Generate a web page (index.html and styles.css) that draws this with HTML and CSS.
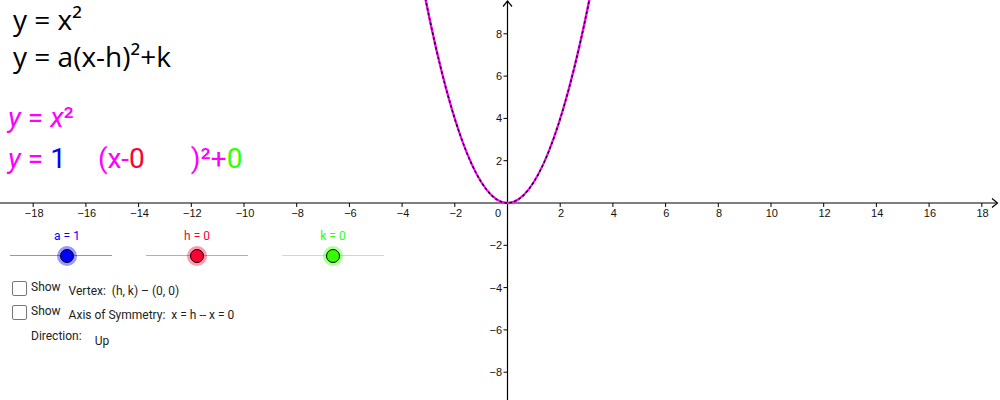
FILE: index.html
```html
<!DOCTYPE html>
<html>
<head>
<meta charset="utf-8">
<link rel="stylesheet" href="styles.css">
</head>
<body>
<div class="applet">
  <svg class="graph" width="1000" height="400" viewBox="0 0 1000 400">
    <g class="axes" stroke="#000" stroke-width="1.2" fill="none">
      <line x1="0" y1="203" x2="997" y2="203"/>
      <polyline points="992,198.5 997.5,203 992,207.5"/>
      <line x1="507.5" y1="400" x2="507.5" y2="1"/>
      <polyline points="503,6.5 507.5,1 512,6.5"/>
    </g>
    <g class="ticks" stroke="#000" stroke-width="1">
      <line x1="33.2" y1="203" x2="33.2" y2="207"/>
      <line x1="85.9" y1="203" x2="85.9" y2="207"/>
      <line x1="138.6" y1="203" x2="138.6" y2="207"/>
      <line x1="191.3" y1="203" x2="191.3" y2="207"/>
      <line x1="244" y1="203" x2="244" y2="207"/>
      <line x1="296.7" y1="203" x2="296.7" y2="207"/>
      <line x1="349.4" y1="203" x2="349.4" y2="207"/>
      <line x1="402.1" y1="203" x2="402.1" y2="207"/>
      <line x1="454.8" y1="203" x2="454.8" y2="207"/>
      <line x1="560.2" y1="203" x2="560.2" y2="207"/>
      <line x1="612.9" y1="203" x2="612.9" y2="207"/>
      <line x1="665.6" y1="203" x2="665.6" y2="207"/>
      <line x1="718.3" y1="203" x2="718.3" y2="207"/>
      <line x1="771" y1="203" x2="771" y2="207"/>
      <line x1="823.7" y1="203" x2="823.7" y2="207"/>
      <line x1="876.4" y1="203" x2="876.4" y2="207"/>
      <line x1="929.1" y1="203" x2="929.1" y2="207"/>
      <line x1="981.8" y1="203" x2="981.8" y2="207"/>
      <line x1="503.5" y1="33.8" x2="507.5" y2="33.8"/>
      <line x1="503.5" y1="76.1" x2="507.5" y2="76.1"/>
      <line x1="503.5" y1="118.4" x2="507.5" y2="118.4"/>
      <line x1="503.5" y1="160.7" x2="507.5" y2="160.7"/>
      <line x1="503.5" y1="245.3" x2="507.5" y2="245.3"/>
      <line x1="503.5" y1="287.6" x2="507.5" y2="287.6"/>
      <line x1="503.5" y1="329.9" x2="507.5" y2="329.9"/>
      <line x1="503.5" y1="372.2" x2="507.5" y2="372.2"/>
    </g>
    <g class="xlabels" text-anchor="middle">
      <text x="34.2" y="217">−18</text>
      <text x="86.9" y="217">−16</text>
      <text x="139.6" y="217">−14</text>
      <text x="192.3" y="217">−12</text>
      <text x="245" y="217">−10</text>
      <text x="297.7" y="217">−8</text>
      <text x="350.4" y="217">−6</text>
      <text x="403.1" y="217">−4</text>
      <text x="455.8" y="217">−2</text>
      <text x="498" y="217">0</text>
      <text x="561" y="217">2</text>
      <text x="613.7" y="217">4</text>
      <text x="666.4" y="217">6</text>
      <text x="719.1" y="217">8</text>
      <text x="771.8" y="217">10</text>
      <text x="824.5" y="217">12</text>
      <text x="877.2" y="217">14</text>
      <text x="929.9" y="217">16</text>
      <text x="982.6" y="217">18</text>
    </g>
    <g class="ylabels" text-anchor="end">
      <text x="502" y="37.8">8</text>
      <text x="502" y="80.1">6</text>
      <text x="502" y="122.4">4</text>
      <text x="502" y="164.7">2</text>
      <text x="502" y="249.3">−2</text>
      <text x="502" y="291.6">−4</text>
      <text x="502" y="333.9">−6</text>
      <text x="502" y="376.2">−8</text>
    </g>
    <path class="curve" d="M424.3,-6.9 Q507.5,412.9 590.7,-6.9" fill="none" stroke="#ff00ff" stroke-width="2.4"/>
    <path class="curve-dash" d="M424.3,-6.9 Q507.5,412.9 590.7,-6.9" fill="none" stroke="#000" stroke-width="1.4" stroke-dasharray="2.5 2.5"/>
  </svg>

  <div class="overlay">
    <div class="formulas">
      <div class="f-line">y = x²</div>
      <div class="f-line">y = a(x-h)²+k</div>
    </div>

    <div class="mag">
      <div class="m-line"><i>y</i> = <i>x</i>²</div>
      <div class="m-line m2"><i>y</i> = <span class="c-blue">1</span><span class="gap1">(x-</span><span class="c-red">0</span><span class="gap2">)²+</span><span class="c-green">0</span></div>
    </div>

    <div class="sliders">
      <div class="slider s-a">
        <div class="s-label">a = 1</div>
        <div class="track"><span class="knob" style="left: 56%"></span></div>
      </div>
      <div class="slider s-h">
        <div class="s-label">h = 0</div>
        <div class="track"><span class="knob" style="left: 50%"></span></div>
      </div>
      <div class="slider s-k">
        <div class="s-label">k = 0</div>
        <div class="track"><span class="knob" style="left: 50%"></span></div>
      </div>
    </div>

    <div class="checks">
      <div class="row">
        <span class="box"></span><span class="show">Show</span><span class="desc">Vertex:&nbsp; (h, k) – (0, 0)</span>
      </div>
      <div class="row">
        <span class="box"></span><span class="show">Show</span><span class="desc">Axis of Symmetry:&nbsp; x = h -- x = 0</span>
      </div>
      <div class="row dir">
        <span class="dlabel">Direction:</span><span class="dval">Up</span>
      </div>
    </div>
  </div>
</div>
</body>
</html>
```

FILE: styles.css
```css
html, body {
  margin: 0;
  padding: 0;
  background: #fff;
}

.applet {
  position: relative;
  width: 1000px;
  height: 400px;
  overflow: hidden;
  background: #fff;
}

.graph {
  position: absolute;
  left: 0;
  top: 0;
  display: block;
}

.graph text {
  font-family: "Liberation Sans", Arial, sans-serif;
  font-size: 11px;
  fill: #111;
}

.overlay {
  position: absolute;
  left: 0;
  top: 0;
  display: flex;
  flex-direction: column;
  font-family: "Open Sans", sans-serif;
}

.formulas {
  padding: 1px 0 0 13px;
  display: flex;
  flex-direction: column;
}

.f-line {
  font-family: "Open Sans", sans-serif;
  font-size: 28px;
  line-height: 37px;
  height: 37px;
  color: #000;
  white-space: pre;
}

.mag {
  margin-top: 22px;
  padding-left: 8px;
  color: #ff00ff;
  font-family: Roboto, sans-serif;
  font-size: 28px;
}

.m-line {
  line-height: 41px;
  height: 41px;
  white-space: pre;
}

.m-line i {
  font-style: italic;
}

.c-blue { color: #0000ff; }
.c-red { color: #ff0033; }
.c-green { color: #33ff00; }

.gap1 { margin-left: 32px; }
.gap2 { margin-left: 46px; }

.sliders {
  margin-top: 50px;
  padding-left: 10px;
  display: flex;
  gap: 34px;
  font-family: Roboto, sans-serif;
}

.slider {
  width: 102px;
  display: flex;
  flex-direction: column;
  align-items: center;
}

.s-label {
  font-size: 12px;
  line-height: 14px;
  height: 14px;
}

.s-a .s-label {
  margin-left: 12px;
}

.track {
  position: relative;
  width: 102px;
  height: 1px;
  margin-top: 12px;
}

.knob {
  position: absolute;
  top: 50%;
  width: 12px;
  height: 12px;
  margin: -7px 0 0 -7px;
  border: 1px solid #000;
  border-radius: 50%;
}

.s-a .s-label { color: #0000ff; }
.s-a .track { background: #8c8cff; }
.s-a .knob { background: #0000ff; box-shadow: 0 0 0 3px rgba(0, 0, 255, 0.4); }

.s-h .s-label { color: #ff0033; }
.s-h .track { background: #ff8ca0; }
.s-h .knob { background: #ff0033; box-shadow: 0 0 0 3px rgba(255, 0, 51, 0.4); }

.s-k .s-label { color: #33ff00; }
.s-k .track { background: #9cff8c; }
.s-k .knob { background: #33ff00; box-shadow: 0 0 0 3px rgba(51, 255, 0, 0.4); }

.checks {
  margin-top: 25px;
  padding-left: 12px;
  display: flex;
  flex-direction: column;
  gap: 9px;
  font-family: Roboto, sans-serif;
  font-size: 12px;
  color: #222;
}

.row {
  display: flex;
  align-items: flex-start;
  height: 15px;
}

.box {
  width: 13px;
  height: 13px;
  border: 1px solid #777;
  border-radius: 2px;
  background: #fff;
  flex: none;
}

.show {
  margin-left: 4px;
  line-height: 13px;
}

.desc {
  margin-left: 8px;
  line-height: 14px;
  padding-top: 3px;
}

.dir {
  padding-left: 19px;
  height: 20px;
}

.dlabel {
  line-height: 14px;
}

.dval {
  margin-left: 13px;
  padding-top: 5px;
  line-height: 14px;
}
```
